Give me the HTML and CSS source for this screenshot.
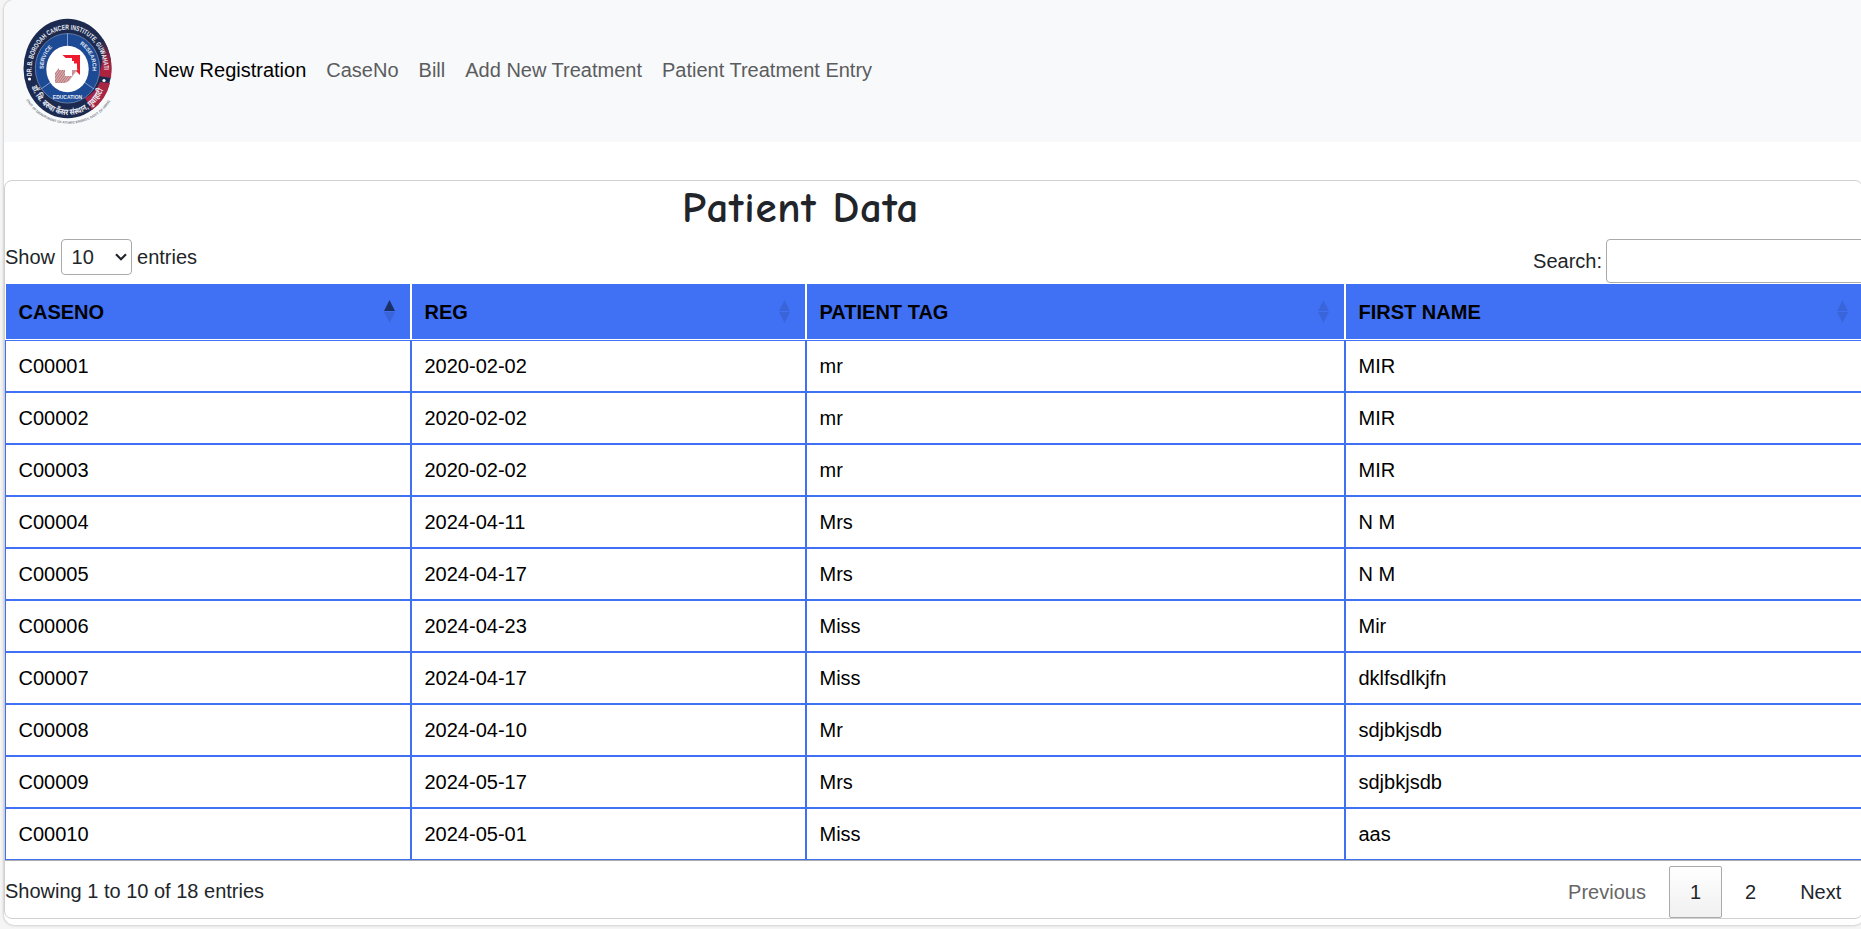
FILE: index.html
```html
<!DOCTYPE html>
<html lang="en">
<head>
<meta charset="utf-8">
<title>Patient Data</title>
<link rel="stylesheet" href="styles.css">
</head>
<body>
<main class="page">
  <nav class="navbar">
    <svg class="logo" viewBox="0 0 90 108">
      <defs>
        <linearGradient id="red" x1="0" y1="0" x2="0" y2="1">
          <stop offset="0" stop-color="#1d2a50"/><stop offset=".5" stop-color="#8a2342"/><stop offset=".8" stop-color="#b3213c"/><stop offset="1" stop-color="#a72644"/>
        </linearGradient>
        <pattern id="dots" width="2" height="2" patternUnits="userSpaceOnUse" patternTransform="rotate(35)"><rect width="2" height="2" fill="#e3c4c5"/><rect width="1.2" height="2" fill="#b87579"/></pattern>
        <path id="arcTop" d="M9 59A36.2 41 0 1 1 80.5 59"/>
        <path id="arcHindi" d="M7 63A39 44 0 0 0 83 63"/>
        <path id="arcDept" d="M3 81A46 40 0 0 0 88 81"/>
        <path id="arcLeft" d="M21 56A24 27 0 0 1 36 25"/>
        <path id="arcRight" d="M54 25A24 27 0 0 1 69 56"/>
      </defs>
      <ellipse cx="44.5" cy="50.5" rx="44" ry="49.7" fill="#1d2a50"/>
      <path d="M80 21A44 49.7 0 0 1 88.4 54L88 60L76 58Q81 40 80 21Z" fill="url(#red)"/>
      <path d="M87 65Q83 82 69 92L62 80Q73 74 77 64Z" fill="#a72644"/>
      <ellipse cx="44.5" cy="50.3" rx="32.2" ry="34.8" fill="#1c4a94" stroke="#8ea4cb" stroke-width=".6"/>
      <path d="M44.5 15.500V28M18 71L28 64M71 71L61 64" stroke="#9fb4d8" stroke-width=".8"/>
      <ellipse cx="44.500" cy="51" rx="21.2" ry="23.2" fill="#fff"/>
      <path d="M39.500 37H57V57L51 51V43H46Z" fill="#ec1c2e"/>
      <path d="M32 55L39 46L55 51L46 63L42 65H32Z" fill="url(#dots)"/>
      <path d="M42 40H49V45.500H54V52H49V58H42V52H36V45.500H42Z" fill="#fff"/>
      <circle cx="6.500" cy="61" r="1.6" fill="#fff"/><circle cx="81" cy="62.500" r="1.6" fill="#fff"/>
      <g class="seal-text">
        <text font-size="7"><textPath href="#arcTop" startOffset="1" textLength="126" lengthAdjust="spacingAndGlyphs">DR. B. BOROOAH CANCER INSTITUTE, GUWAHATI</textPath></text>
        <text font-size="8.500"><textPath href="#arcHindi" startOffset="6" textLength="95" lengthAdjust="spacingAndGlyphs">डॉ. बि. बरुवा कैंसर संस्थान, गुवाहाटी</textPath></text>
        <text font-size="5.500"><textPath href="#arcLeft" startOffset="5">SERVICE</textPath></text>
        <text font-size="5.500"><textPath href="#arcRight" startOffset="3">RESEARCH</textPath></text>
        <text font-size="5" x="44.500" y="80.500" text-anchor="middle">EDUCATION</text>
      </g>
      <text class="seal-note" font-size="3.400"><textPath href="#arcDept" startOffset="1" textLength="100" lengthAdjust="spacingAndGlyphs">(UNIT OF DEPARTMENT OF ATOMIC ENERGY, GOVT. OF INDIA)</textPath></text>
    </svg>
    <div class="links">
      <a class="active">New Registration</a><a>CaseNo</a><a>Bill</a><a>Add New Treatment</a><a>Patient Treatment Entry</a>
    </div>
  </nav>
  <section class="card">
    <h1>Patient Data</h1>
    <div class="controls">
      <label class="length">Show
        <span class="select">10<svg width="12" height="8" viewBox="0 0 12 8"><path d="M1 1.3L6 6.3L11 1.3" fill="none" stroke="#212529" stroke-width="2.2"/></svg></span>
        entries</label>
      <label class="search">Search:<input type="text"></label>
    </div>
    <table>
      <colgroup><col class="c1"><col class="c2"><col class="c3"><col class="c4"></colgroup>
      <thead><tr>
        <th><div>CASENO<i class="sort asc"></i></div></th>
        <th><div>REG<i class="sort"></i></div></th>
        <th><div>PATIENT TAG<i class="sort"></i></div></th>
        <th><div>FIRST NAME<i class="sort"></i></div></th>
      </tr></thead>
      <tbody>
        <tr><td>C00001</td><td>2020-02-02</td><td>mr</td><td>MIR</td></tr>
        <tr><td>C00002</td><td>2020-02-02</td><td>mr</td><td>MIR</td></tr>
        <tr><td>C00003</td><td>2020-02-02</td><td>mr</td><td>MIR</td></tr>
        <tr><td>C00004</td><td>2024-04-11</td><td>Mrs</td><td>N M</td></tr>
        <tr><td>C00005</td><td>2024-04-17</td><td>Mrs</td><td>N M</td></tr>
        <tr><td>C00006</td><td>2024-04-23</td><td>Miss</td><td>Mir</td></tr>
        <tr><td>C00007</td><td>2024-04-17</td><td>Miss</td><td>dklfsdlkjfn</td></tr>
        <tr><td>C00008</td><td>2024-04-10</td><td>Mr</td><td>sdjbkjsdb</td></tr>
        <tr><td>C00009</td><td>2024-05-17</td><td>Mrs</td><td>sdjbkjsdb</td></tr>
        <tr><td>C00010</td><td>2024-05-01</td><td>Miss</td><td>aas</td></tr>
      </tbody>
    </table>
    <footer class="footer">
      <span class="info">Showing 1 to 10 of 18 entries</span>
      <div class="pager"><a class="disabled">Previous</a><a class="current">1</a><a>2</a><a>Next</a></div>
    </footer>
  </section>
</main>
</body>
</html>
```
FILE: styles.css
```css
* { box-sizing: border-box; }
html, body { height: 100%; overflow: hidden; }
body {
  margin: 0;
  padding-left: 4px;
  background: #f5f5f5;
  color: #212529;
  font: 20px/30px "Liberation Sans", Arial, sans-serif;
}
.page {
  width: 1860px;
  height: 925px;
  background: #fff;
  border-radius: 10px;
  box-shadow: 0 0 3px rgba(0, 0, 0, .3);
}
.navbar {
  display: flex;
  align-items: center;
  height: 142px;
  padding-left: 19px;
  background: #f8f9fb;
  border-radius: 10px 0 0 0;
}
.logo { width: 90px; height: 108px; margin: 2px 41px 0 0; overflow: visible; }
.seal-text { fill: #e7ebf4; font-family: "Liberation Sans", "Noto Sans", sans-serif; font-weight: 700; }
.seal-note { fill: #777c86; font-weight: 700; }
.links { display: flex; gap: 20px; padding-bottom: 2px; color: #5b5c5d; }
.links .active { color: #000; }
.card {
  width: 1859px;
  height: 739px;
  margin: 38px 0 0 0;
  border: 1px solid #d0d0d0;
  border-radius: 8px;
  background: #fff;
}
h1 {
  height: 48px;
  margin: 5px 0;
  padding-left: 677px;
  font: 700 43px/45px "Comic Sans MS", "Comic Neue", Inter, sans-serif;
  letter-spacing: .8px;
}
.controls {
  display: flex;
  justify-content: space-between;
  align-items: flex-start;
  height: 44px;
}
.length { display: flex; align-items: center; gap: 5.5px; height: 36px; }
.select {
  display: flex;
  align-items: center;
  justify-content: space-between;
  width: 71px;
  height: 36px;
  padding: 0 4px 0 10px;
  border: 1px solid #aaa;
  border-radius: 4px;
}
.search { display: flex; align-items: center; gap: 4px; height: 44px; margin-right: -5px; }
.search input { width: 261px; height: 44px; border: 1px solid #aaa; border-radius: 4px; }
table {
  width: 1859px;
  table-layout: fixed;
  border-spacing: 0;
  border-bottom: 1px solid #aaa;
  color: #000;
}
.c1 { width: 406px; }
.c2 { width: 395px; }
.c3 { width: 539px; }
th, td { border: 1px solid #4070f4; padding: 0 12px 0 12.5px; text-align: left; }
th { height: 57px; padding-right: 15px; border-color: #fff; background: #4070f4; }
th div { display: flex; justify-content: space-between; align-items: center; }
td { height: 52px; }
.sort { display: grid; gap: 1px; }
.sort::before, .sort::after {
  content: "";
  width: 11px;
  height: 11px;
  background: #3a65da;
  clip-path: polygon(50% 0, 100% 100%, 0 100%);
}
.sort::after { clip-path: polygon(0 0, 100% 0, 50% 100%); }
.sort.asc::before { background: #1b3067; }
.footer { display: flex; justify-content: space-between; padding-top: 5px; }
.info { padding-top: 10px; }
.pager { display: flex; gap: 2px; margin-right: -.3px; }
.pager a { height: 52px; padding: 0 20px; border: 1px solid transparent; border-radius: 2px; line-height: 50px; }
.pager .disabled { color: #666; }
.pager .current { border-color: #aaa; background: linear-gradient(#fff, #f0f0f0); }
```
